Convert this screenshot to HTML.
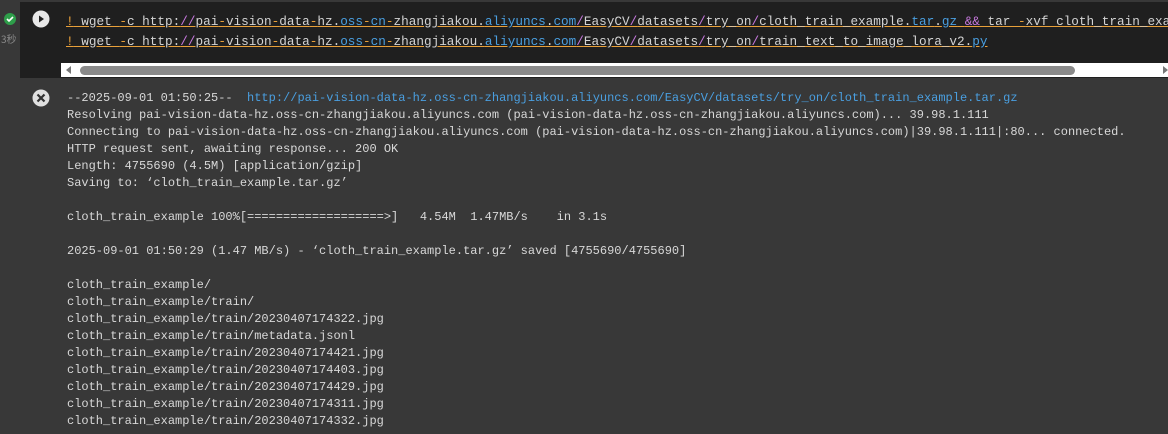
<!DOCTYPE html><html><head><style>
body{margin:0;width:1168px;height:434px;background:#383838;overflow:hidden;position:relative;font-family:"Liberation Mono",monospace}
.cell{position:absolute;left:20px;top:2px;width:1148px;height:76px;background:#1f1f1f;overflow:hidden}
.code{position:absolute;left:46px;font-size:12.7px;color:#d4d4d4;white-space:pre;font-family:"Liberation Mono","Noto Serif CJK SC",monospace}
.o{color:#e8a03a}.p{color:#c678dd}.b{color:#4a9fe0}
.u{text-decoration:underline;text-decoration-color:#e8a03a}
.out{position:absolute;left:67px;top:90px;font-size:12px;line-height:17px;color:#d8d8d8;white-space:pre}
</style></head><body>
<svg style="position:absolute;left:3px;top:12px" width="14" height="14"><circle cx="7" cy="7" r="6" fill="#2e9e4a"/><path d="M4 7l2 2 4-4" stroke="#fff" stroke-width="1.6" fill="none"/></svg>
<div style="position:absolute;left:1px;top:31px;font-size:10px;color:#888;font-family:'Noto Sans CJK SC',sans-serif">3秒</div>
<div class="cell">
<div class="code u" style="top:12px"><span class="o">!</span> wget <span class="o">-</span>c http:<span class="p">//</span>pai<span class="o">-</span>vision<span class="o">-</span>data<span class="o">-</span>hz.<span class="b">oss</span><span class="o">-</span><span class="b">cn</span><span class="o">-</span>zhangjiakou.<span class="b">aliyuncs</span>.<span class="b">com</span><span class="p">/</span>EasyCV<span class="p">/</span>datasets<span class="p">/</span>try_on<span class="p">/</span>cloth_train_example.<span class="b">tar</span>.<span class="b">gz</span> <span class="p">&amp;&amp;</span> tar <span class="o">-</span>xvf cloth_train_example.tar.gz</div>
<div class="code u" style="top:32px"><span class="o">!</span> wget <span class="o">-</span>c http:<span class="p">//</span>pai<span class="o">-</span>vision<span class="o">-</span>data<span class="o">-</span>hz.<span class="b">oss</span><span class="o">-</span><span class="b">cn</span><span class="o">-</span>zhangjiakou.<span class="b">aliyuncs</span>.<span class="b">com</span><span class="p">/</span>EasyCV<span class="p">/</span>datasets<span class="p">/</span>try_on<span class="p">/</span>train_text_to_image_lora_v2.<span class="b">py</span></div>
</div>
<svg style="position:absolute;left:32px;top:10px" width="18" height="18"><circle cx="9" cy="9" r="8.5" fill="#e8e8e8"/><path d="M7 5.5l5 3.5-5 3.5z" fill="#222"/></svg>
<div style="position:absolute;left:61px;top:63px;width:1107px;height:14px;background:#fff"></div>
<div style="position:absolute;left:66px;top:66px;width:0;height:0;border-top:4px solid transparent;border-bottom:4px solid transparent;border-right:5px solid #777"></div>
<div style="position:absolute;left:80px;top:66px;width:995px;height:9px;background:#8a8a8a;border-radius:5px"></div>
<div style="position:absolute;left:1163px;top:66px;width:0;height:0;border-top:4px solid transparent;border-bottom:4px solid transparent;border-left:5px solid #777"></div>
<svg style="position:absolute;left:32px;top:89px" width="18" height="18"><circle cx="9" cy="9" r="8.5" fill="#e0e0e0"/><path d="M5.5 5.5l7 7M12.5 5.5l-7 7" stroke="#333" stroke-width="2.2"/></svg>
<div class="out">--2025-09-01 01:50:25--  <span class="b">http://pai-vision-data-hz.oss-cn-zhangjiakou.aliyuncs.com/EasyCV/datasets/try_on/cloth_train_example.tar.gz</span>
Resolving pai-vision-data-hz.oss-cn-zhangjiakou.aliyuncs.com (pai-vision-data-hz.oss-cn-zhangjiakou.aliyuncs.com)... 39.98.1.111
Connecting to pai-vision-data-hz.oss-cn-zhangjiakou.aliyuncs.com (pai-vision-data-hz.oss-cn-zhangjiakou.aliyuncs.com)|39.98.1.111|:80... connected.
HTTP request sent, awaiting response... 200 OK
Length: 4755690 (4.5M) [application/gzip]
Saving to: ‘cloth_train_example.tar.gz’

cloth_train_example 100%[===================>]   4.54M  1.47MB/s    in 3.1s

2025-09-01 01:50:29 (1.47 MB/s) - ‘cloth_train_example.tar.gz’ saved [4755690/4755690]

cloth_train_example/
cloth_train_example/train/
cloth_train_example/train/20230407174322.jpg
cloth_train_example/train/metadata.jsonl
cloth_train_example/train/20230407174421.jpg
cloth_train_example/train/20230407174403.jpg
cloth_train_example/train/20230407174429.jpg
cloth_train_example/train/20230407174311.jpg
cloth_train_example/train/20230407174332.jpg</div>
</body></html>
